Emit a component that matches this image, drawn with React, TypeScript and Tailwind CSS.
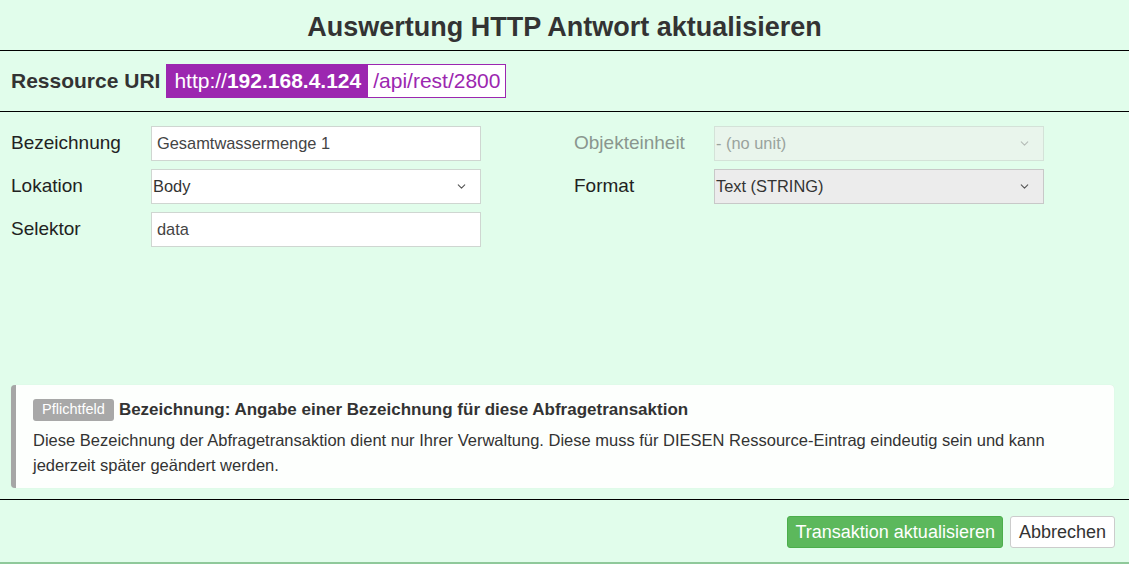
import { ChevronDown } from "lucide-react";

const font = { fontFamily: '"Liberation Sans", Arial, sans-serif' };

function Field({ label, value }: { label: string; value: string }) {
	return (
		<div className="flex items-center h-[34px]">
			<div className="w-[140px] text-[19px] text-[#222]">{label}</div>
			<div className="w-[330px] h-[35px] bg-white border border-[#cfd6d1] px-[5px] flex items-center text-[16.4px] text-[#444]">
				{value}
			</div>
		</div>
	);
}

function Select({
	label,
	value,
	disabled,
	gray,
}: {
	label: string;
	value: string;
	disabled?: boolean;
	gray?: boolean;
}) {
	return (
		<div className="flex items-center h-[34px]">
			<div
				className={`w-[140px] text-[19px] ${disabled ? "text-[#8a968e]" : "text-[#222]"}`}
			>
				{label}
			</div>
			<div
				className={`w-[330px] h-[35px] border flex items-center justify-between pl-[1px] pr-[12px] text-[16.4px] ${
					disabled
						? "bg-[#e9f5ec] border-[#d4e2d8] text-[#9aa39d]"
						: gray
							? "bg-[#ececec] border-[#c8c8c8] text-[#333]"
							: "bg-white border-[#cfd6d1] text-[#333]"
				}`}
			>
				<span>{value}</span>
				<ChevronDown
					className={`w-[13px] h-[13px] ${disabled ? "text-[#b5bcb7]" : "text-[#555]"}`}
					strokeWidth={2}
				/>
			</div>
		</div>
	);
}

export default function App() {
	return (
		<div style={font} className="w-[1129px] h-[564px] bg-[#e1fdeb] text-[#333] flex flex-col overflow-hidden">
			<div className="h-[51px] border-b border-black flex items-center justify-center">
				<h1 className="text-[27px] font-bold text-[#333] mt-[4px]">
					Auswertung HTTP Antwort aktualisieren
				</h1>
			</div>

			<div className="h-[61px] border-b border-black flex items-center px-[11px] gap-[6px]">
				<span className="text-[21px] font-bold text-[#333]">Ressource URI</span>
				<div className="flex h-[34px]">
					<div className="bg-[#9c27b0] text-white text-[21px] pl-[8px] pr-[6px] flex items-center">
						http://<span className="font-bold">192.168.4.124</span>
					</div>
					<div className="bg-white border border-[#9c27b0] text-[#9c27b0] text-[21px] px-[5px] flex items-center">
						/api/rest/2800
					</div>
				</div>
			</div>

			<div className="h-[273px] px-[11px] pt-[14px] grid grid-cols-[563px_1fr]">
				<div className="flex flex-col gap-[9px]">
					<Field label="Bezeichnung" value="Gesamtwassermenge 1" />
					<Select label="Lokation" value="Body" />
					<Field label="Selektor" value="data" />
				</div>
				<div className="flex flex-col gap-[9px]">
					<Select label="Objekteinheit" value="- (no unit)" disabled />
					<Select label="Format" value="Text (STRING)" gray />
				</div>
			</div>

			<div className="mx-[11px] mr-[15px] h-[103px] bg-[#fdfffd] border-l-[5px] border-[#a6a6a6] rounded-[4px] pl-[17px] pr-[16px] pt-[12px] shadow-[0_0_1px_rgba(0,0,0,0.1)]">
				<div className="flex items-center gap-[5px]">
					<span className="bg-[#a8a8a8] text-white text-[14.5px] px-[9px] h-[22px] flex items-center rounded-[3px]">
						Pflichtfeld
					</span>
					<span className="text-[17px] font-bold text-[#333]">
						Bezeichnung: Angabe einer Bezeichnung für diese Abfragetransaktion
					</span>
				</div>
				<p className="text-[16.5px] leading-[25px] text-[#333] mt-[5px]">
					Diese Bezeichnung der Abfragetransaktion dient nur Ihrer Verwaltung. Diese muss für
					DIESEN Ressource-Eintrag eindeutig sein und kann jederzeit später geändert werden.
				</p>
			</div>

			<div className="mt-[11px] border-t border-black flex-1 flex items-start justify-end gap-[7px] pr-[14px] pt-[16px] border-b-2 border-b-[#8fc99a]">
				<button className="bg-[#5cb85c] text-white text-[18px] h-[32px] px-[7px] rounded-[3px] border border-[#4cae4c]">
					Transaktion aktualisieren
				</button>
				<button className="bg-white text-[#333] text-[18px] h-[32px] px-[8px] rounded-[3px] border border-[#ccc]">
					Abbrechen
				</button>
			</div>
		</div>
	);
}
